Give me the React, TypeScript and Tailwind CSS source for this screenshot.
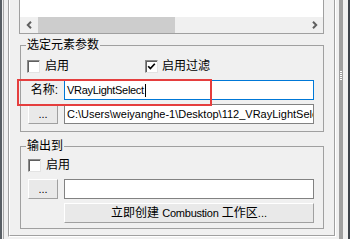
import React from "react";

function Checkbox({ checked = false }: { checked?: boolean }) {
  return (
    <span className="flex h-[13px] w-[13px] shrink-0 items-center justify-center border border-t-[#8a8a8a] border-l-[#8a8a8a] border-r-[#e3e3e3] border-b-[#e3e3e3] bg-white shadow-[inset_1px_1px_0_#5f5f5f]">
      {checked && (
        <svg width="9" height="9" viewBox="0 0 9 9">
          <polyline points="1.2,4.2 3.4,6.6 7.8,1.8" fill="none" stroke="#000" strokeWidth="1.7" />
        </svg>
      )}
    </span>
  );
}

function DotsButton() {
  return (
    <div className="flex h-[20px] w-[30px] shrink-0 items-center justify-center border border-t-white border-l-white border-r-[#a0a0a0] border-b-[#a0a0a0] bg-[#e9e9e9] text-[11px] leading-[14px]">
      ...
    </div>
  );
}

export default function App() {
  return (
    <div className="relative flex h-[239px] w-[350px] overflow-hidden bg-[#f0f0f0] font-['Liberation_Sans','Noto_Sans_CJK_SC',sans-serif] text-[12px] text-black">
      {/* left edge strip */}
      <div className="flex shrink-0">
        <div className="w-[2px] bg-[#585e64]" />
        <div className="w-[1px]" />
        <div className="w-[1px] bg-[#a8a8a8]" />
        <div className="w-[4px]" />
      </div>

      {/* rollout panel */}
      <div className="flex w-[328px] shrink-0 flex-col self-start border-l border-r border-b border-l-[#a0a0a0] border-r-white border-b-white">
        <div className="flex flex-col border-l border-r border-b border-l-white border-r-[#a0a0a0] border-b-[#a0a0a0]">
          {/* list box */}
          <div className="ml-[9px] flex h-[34px] w-[305px] flex-col justify-end border-l border-r border-b border-[#a0a0a0] bg-white">
            <div className="flex h-[16px] bg-[#f0f0f0]">
              <div className="flex w-[18px] items-center justify-center">
                <svg width="7" height="8" viewBox="0 0 7 8">
                  <polyline points="5,0.8 1.8,4 5,7.2" fill="none" stroke="#606060" strokeWidth="2" />
                </svg>
              </div>
              <div className="w-[137px] bg-[#cdcdcd]" />
              <div className="flex-1" />
              <div className="flex w-[18px] items-center justify-center">
                <svg width="7" height="8" viewBox="0 0 7 8">
                  <polyline points="2,0.8 5.2,4 2,7.2" fill="none" stroke="#606060" strokeWidth="2" />
                </svg>
              </div>
            </div>
          </div>

          {/* group 1 */}
          <fieldset className="ml-[10px] mt-[4px] w-[304px] border border-[#a0a0a0] pb-[7px]">
            <legend className="ml-[5px] h-[14px] px-[1px] leading-[14px]">选定元素参数</legend>
            <div className="mt-[8px] flex h-[13px] items-center pl-[6px] leading-[13px]">
              <div className="flex w-[118px] items-center">
                <Checkbox />
                <span className="ml-[5px]">启用</span>
              </div>
              <Checkbox checked />
              <span className="ml-[4px]">启用过滤</span>
            </div>
            <div className="mt-[7px] flex h-[20px] items-center pl-[7px]">
              <span className="w-[30px] shrink-0 whitespace-nowrap text-right">名称:</span>
              <div className="ml-[6px] flex h-[20px] w-[250px] items-center border border-[#0078d7] bg-white pl-[2px] text-[11px] tracking-[-0.3px]">
                <span>VRayLightSelect</span>
                <span className="ml-[1px] h-[13px] w-[1px] bg-black" />
              </div>
            </div>
            <div className="mt-[4px] flex h-[20px] items-center pl-[7px]">
              <DotsButton />
              <div className="ml-[6px] flex h-[20px] w-[250px] items-center overflow-hidden whitespace-nowrap border border-[#828282] bg-white pl-[2px] text-[11px]">
                C:\Users\weiyanghe-1\Desktop\112_VRayLightSelect
              </div>
            </div>
          </fieldset>

          {/* group 2 */}
          <fieldset className="mb-[6px] ml-[10px] mt-[7px] w-[304px] border border-[#a0a0a0] pb-[5px]">
            <legend className="ml-[5px] h-[14px] px-[1px] leading-[14px]">输出到</legend>
            <div className="mt-[6px] flex h-[13px] items-center pl-[7px] leading-[13px]">
              <Checkbox />
              <span className="ml-[5px]">启用</span>
            </div>
            <div className="mt-[7px] flex h-[20px] items-center pl-[7px]">
              <DotsButton />
              <div className="ml-[6px] h-[20px] w-[250px] border border-[#828282] bg-white" />
            </div>
            <div className="mt-[4px] flex pl-[43px]">
              <div className="flex h-[20px] w-[250px] items-center justify-center whitespace-pre border border-t-white border-l-white border-r-[#a0a0a0] border-b-[#a0a0a0] bg-[#e9e9e9]">
                <span>立即创建 </span>
                <span className="text-[11px] tracking-[-0.25px]">Combustion</span>
                <span> 工作区</span>
                <span className="text-[11px]">...</span>
              </div>
            </div>
          </fieldset>
        </div>
      </div>

      {/* right edge: scrollbar strip */}
      <div className="flex shrink-0">
        <div className="w-[3px]" />
        <div className="flex w-[4px] flex-col items-center gap-[1px] bg-[#a0a0a0] pt-[71px]">
          <div className="h-[1px] w-[2px] bg-white" />
          <div className="h-[1px] w-[2px] bg-white" />
          <div className="h-[1px] w-[2px] bg-white" />
          <div className="h-[1px] w-[2px] bg-white" />
          <div className="h-[1px] w-[2px] bg-white" />
        </div>
        <div className="w-[5px]" />
        <div className="w-[2px] bg-[#3c4249]" />
      </div>

      {/* red highlight annotation */}
      <div className="pointer-events-none absolute left-[17px] top-[79px] h-[27px] w-[195px] border-2 border-[#e53e3e]" />
    </div>
  );
}
